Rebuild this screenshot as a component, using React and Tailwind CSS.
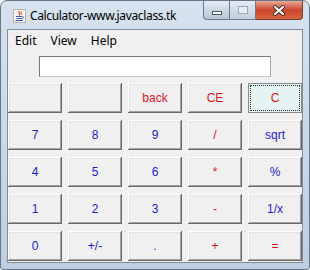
import React from 'react';

// key label, colour, focused
const KEYS = [
  ['', 'b'], ['', 'b'], ['back', 'r'], ['CE', 'r'], ['C', 'r', true],
  ['7', 'b'], ['8', 'b'], ['9', 'b'], ['/', 'r'], ['sqrt', 'b'],
  ['4', 'b'], ['5', 'b'], ['6', 'b'], ['*', 'r'], ['%', 'b'],
  ['1', 'b'], ['2', 'b'], ['3', 'b'], ['-', 'r'], ['1/x', 'b'],
  ['0', 'b'], ['+/-', 'b'], ['.', 'b'], ['+', 'r'], ['=', 'r'],
];

const JavaIcon = () => (
  <svg width="13" height="14" viewBox="0 0 13 14" className="shrink-0">
    <rect x="0.5" y="0.5" width="12" height="13" fill="#f7f3ec" stroke="#b9b2a6" />
    <path d="M6.5 2 C4.5 3.5 8 4.5 6 6.5 M8.5 3 C7.5 4 9 4.5 8 5.5" stroke="#d8482a" strokeWidth="1.2" fill="none" />
    <path d="M3 7.5 H9.5 M3.5 9.5 H9 M2.5 11.5 H10" stroke="#3a5aa8" strokeWidth="1" fill="none" />
    <path d="M9.5 7.5 C11 7.5 11 9.5 9 9.5" stroke="#3a5aa8" strokeWidth="0.9" fill="none" />
  </svg>
);

const CaptionButtons = () => (
  <div className="flex self-start">
    <div className="w-[27px] h-[19px] flex items-center justify-center rounded-bl-[4px] border border-t-0 border-[#6a7888] bg-gradient-to-b from-[#e4ebf3] via-[#cdd8e5] to-[#b8c6d6]">
      <div className="mt-[5px] w-[10px] h-[4px] bg-white border border-[#4d5866]" />
    </div>
    <div className="w-[26px] h-[19px] flex items-center justify-center border border-l-0 border-t-0 border-[#6a7888] bg-gradient-to-b from-[#e4ebf3] via-[#d3dce8] to-[#c2cfdd]">
      <div className="w-[10px] h-[8px] border border-[#9aa6b4] bg-[#e6ecf3]" />
    </div>
    <div className="w-[47px] h-[19px] flex items-center justify-center rounded-br-[4px] border border-l-0 border-t-0 border-[#7a3a30] bg-gradient-to-b from-[#e9a898] via-[#c9452f] to-[#d9643e]">
      <svg width="14" height="11" viewBox="0 0 14 11">
        <path d="M3 2 L11 9 M11 2 L3 9" stroke="#4a2a26" strokeWidth="4" strokeLinecap="round" />
        <path d="M3 2 L11 9 M11 2 L3 9" stroke="#ffffff" strokeWidth="2.2" strokeLinecap="round" />
      </svg>
    </div>
  </div>
);

const Key = ({ label, tone, focused }) => {
  const colour = tone === 'r' ? 'text-[#e0141e]' : 'text-[#1c1cd0]';
  if (focused) {
    return (
      <div className="h-[30px] p-[1px] border border-[#8a8a8a] bg-[#e6f3f3]">
        <div className={`h-full flex items-center justify-center border border-dotted border-[#1e3a3a] ${colour}`}>
          {label}
        </div>
      </div>
    );
  }
  return (
    <div
      className={`h-[30px] flex items-center justify-center bg-[#f0f0f0] shadow-[inset_-1px_-1px_#696969,inset_1px_1px_#ffffff,inset_-2px_-2px_#a0a0a0,inset_2px_2px_#e3e3e3] ${colour}`}
    >
      {label}
    </div>
  );
};

export default function App() {
  return (
    <div className="w-[310px] h-[270px] bg-white">
      <div className="w-full h-full flex flex-col px-[6px] pb-[6px] rounded-t-[7px] rounded-b-[3px] border border-[#66778a] bg-gradient-to-b from-[#d6e2ee] to-[#bfcfe0]">
        <div className="h-[28px] flex items-stretch">
          <div className="flex items-center pl-[6px] gap-[4px] pt-[1px]">
            <JavaIcon />
            <span className="text-[12px] tracking-[-0.35px] text-black font-['Noto_Sans',sans-serif] leading-none">
              Calculator-www.javaclass.tk
            </span>
          </div>
          <div className="ml-auto">
            <CaptionButtons />
          </div>
        </div>

        <div className="flex-1 flex flex-col border border-[#7f8c9a] bg-[#f0f0f0]">
          <div className="h-[21px] flex items-center text-[12px] text-black font-['Noto_Sans',sans-serif]">
            <span className="px-[7px]">Edit</span>
            <span className="px-[7px]">View</span>
            <span className="px-[7px]">Help</span>
          </div>

          <div className="mt-[5px] flex justify-center">
            <div className="w-[232px] h-[21px] bg-white border border-[#7a7a7a] border-r-[#a8a8a8] border-b-[#c4c4c4]" />
          </div>

          <div className="mt-[6px] grid grid-cols-5 gap-x-[6px] gap-y-[7px] font-['Liberation_Sans',Arial,sans-serif] text-[12px]">
            {KEYS.map(([label, tone, focused], i) => (
              <Key key={i} label={label} tone={tone} focused={focused} />
            ))}
          </div>
        </div>
      </div>
    </div>
  );
}
